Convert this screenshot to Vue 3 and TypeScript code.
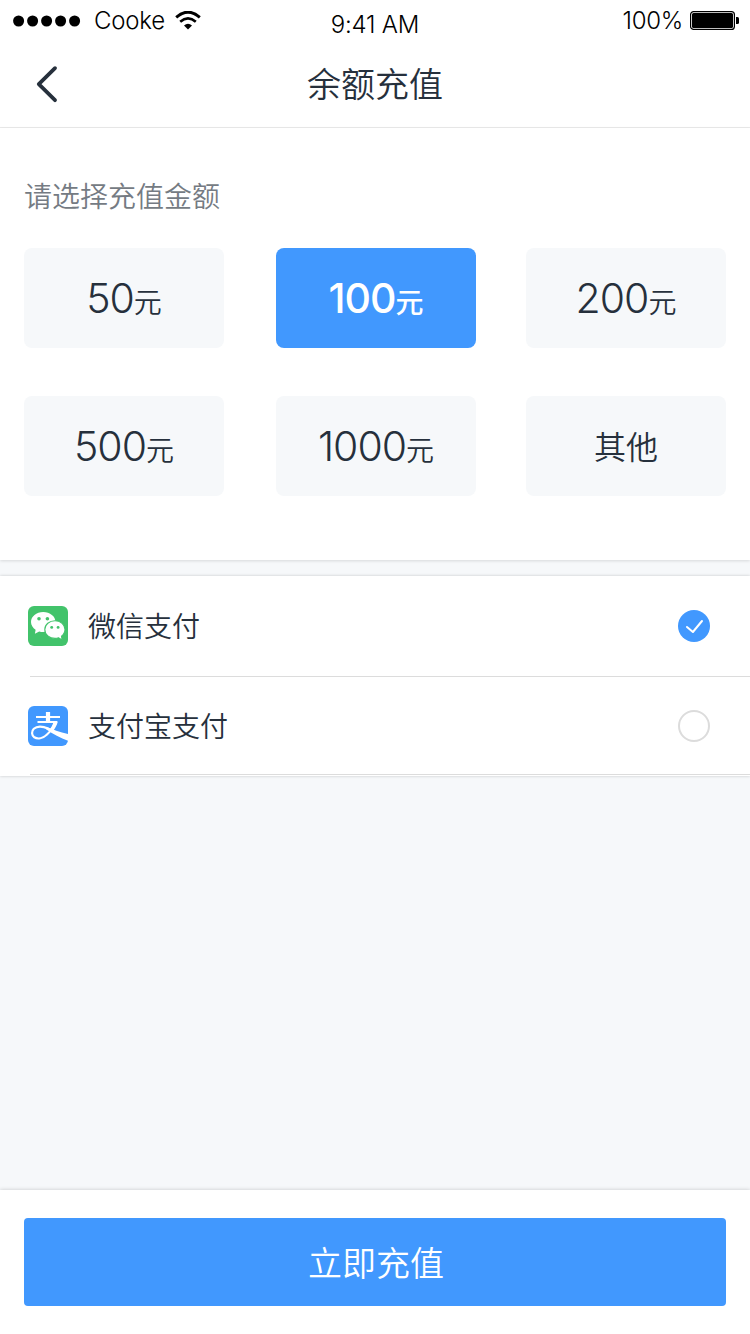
<script setup lang="ts">
import { ref } from 'vue'

interface Amount {
  value: string
  unit: string
}

const amounts: Amount[] = [
  { value: '50', unit: '元' },
  { value: '100', unit: '元' },
  { value: '200', unit: '元' },
  { value: '500', unit: '元' },
  { value: '1000', unit: '元' },
  { value: '', unit: '其他' },
]
const methods = [
  { id: 'wechat', name: '微信支付' },
  { id: 'alipay', name: '支付宝支付' },
]
const selected = ref(1)
const method = ref('wechat')
</script>

<template>
  <div class="page">
    <header class="top">
      <div class="status">
        <div class="carrier">
          <svg width="68" height="12" viewBox="0 0 68 12">
            <circle v-for="n in 5" :key="n" :cx="14 * n - 8.4" cy="6" r="5.5" />
          </svg>
          <span class="carrier-name">Cooke</span>
          <svg class="wifi" width="26" height="19" viewBox="0 0 26 19" fill="none" stroke="#000">
            <path d="M1.2 6.3Q13-4 24.8 6.3" stroke-width="2.9" />
            <path d="M5.2 10.7Q13 4.2 20.8 10.7" stroke-width="2.7" />
            <path d="M9 14.6Q13 10.8 17 14.6L13 18.4Z" fill="#000" stroke="none" />
          </svg>
        </div>
        <span class="time">9:41 AM</span>
        <div class="power">
          <span class="percent">100%</span>
          <svg width="49" height="19" viewBox="0 0 49 19">
            <rect x=".6" y=".6" width="43.8" height="17.8" rx="3" fill="none" stroke="#000" stroke-width="1.2" />
            <rect x="2" y="2" width="41" height="15" rx="1.5" />
            <path d="M46 6h1.5a1.5 1.5 0 0 1 1.5 1.5v4a1.5 1.5 0 0 1-1.5 1.5H46z" />
          </svg>
        </div>
      </div>
      <nav class="nav">
        <svg class="back" width="24" height="38" viewBox="0 0 24 38" fill="none" stroke="#26303c" stroke-width="3.8" stroke-linecap="round" stroke-linejoin="round">
          <path d="M20 3.200L3.800 19.200L20 35.200" />
        </svg>
        <h1 class="title">余额充值</h1>
        <span class="nav-side"></span>
      </nav>
    </header>

    <section class="amounts">
      <h2 class="label">请选择充值金额</h2>
      <div class="grid">
        <button
          v-for="(item, i) in amounts"
          :key="i"
          class="amount"
          :class="{ active: selected === i, other: !item.value }"
          @click="selected = i"
        >
          <span v-if="item.value" class="value">{{ item.value }}</span><span class="unit">{{ item.unit }}</span>
        </button>
      </div>
    </section>

    <section class="methods">
      <div v-for="m in methods" :key="m.id" class="method" @click="method = m.id">
        <svg v-if="m.id === 'wechat'" class="logo" width="40" height="40" viewBox="0 0 40 40">
          <rect width="40" height="40" rx="6" fill="#42c36b" />
          <path d="M15.2 6C8.4 6 3 10.5 3 16c0 3.2 1.8 5.900 4.600 7.700L6.900 27.800l4.300-2.400c1.300.4 2.600.6 4 .6 6.800 0 12.300-4.400 12.300-10S22 6 15.200 6z" fill="#fff" />
          <path d="M27 14.700c5.600 0 10 4 10 8.800 0 2.700-1.400 5-3.500 6.700l.7 3.700-3.600-2.100c-1.100.4-2.300.6-3.600.6-5.600 0-10.200-3.900-10.200-8.900s4.600-8.800 10.200-8.800z" fill="#fff" stroke="#42c36b" stroke-width="1.100" />
          <g fill="#42c36b">
            <circle cx="11" cy="12.800" r="1.800" /><circle cx="19.400" cy="12.800" r="1.800" />
            <circle cx="23.700" cy="21.400" r="1.450" /><circle cx="30.100" cy="21.400" r="1.450" />
          </g>
        </svg>
        <svg v-else class="logo" width="40" height="40" viewBox="0 0 40 40">
          <rect width="40" height="40" rx="6" fill="#4198fe" />
          <g fill="none" stroke="#fff">
            <path d="M8 11H32M9.500 16H29" stroke-width="2" />
            <path d="M20 6V16" stroke-width="4.200" />
            <path d="M27.600 15.500C26 20.500 23 25 19 28.500C14.500 32.700 9.500 33.300 6.300 31.300C3.500 29.300 3.300 25.300 5.800 22.800C9.500 19.500 15.500 20.500 20.500 22.800" stroke-width="2.200" />
          </g>
          <path d="M18 20.800C24 23 32 26.600 40 28V34.800C32.500 32.400 25 28 18 23.300z" fill="#fff" />
          <path d="M25.700 15.400h4.200c-1.200 4.200-3 7.300-5.400 10.200l-3.200-1.700c2.100-2.700 3.500-5.300 4.400-8.500z" fill="#fff" />
        </svg>
        <div class="method-name">{{ m.name }}</div>
        <span class="radio" :class="{ checked: method === m.id }">
          <svg v-if="method === m.id" width="32" height="32" viewBox="0 0 32 32" fill="none" stroke="#fff" stroke-width="2" stroke-linecap="round" stroke-linejoin="round">
            <path d="M9 17L14.900 22L24 11" />
          </svg>
        </span>
      </div>
    </section>

    <footer class="footer">
      <button class="submit">立即充值</button>
    </footer>
  </div>
</template>

<style>
body {
  margin: 0;
}
</style>

<style scoped>
.page {
  display: flex;
  flex-direction: column;
  width: 750px;
  height: 1334px;
  overflow: hidden;
  background: #f6f8fa;
  color: #26303c;
  font-family: "Noto Sans CJK SC", sans-serif;
  font-weight: 350;
}
.top {
  height: 127px;
  background: #fff;
  border-bottom: 1px solid #ebebeb;
}
.status {
  display: grid;
  grid-template-columns: 1fr auto 1fr;
  height: 40px;
  color: #000;
  font: 350 24px/40px Inter, "Liberation Sans", sans-serif;
}
.carrier {
  display: flex;
  align-items: center;
  height: 41px;
  padding-left: 13px;
}
.carrier-name {
  margin-left: 13px;
  letter-spacing: -0.2px;
}
.wifi {
  margin-left: 10px;
}
.time {
  padding-top: 5px;
  letter-spacing: -0.2px;
}
.power {
  display: flex;
  align-items: center;
  justify-content: flex-end;
  height: 41px;
  padding-right: 11px;
}
.percent {
  margin-right: 7px;
  letter-spacing: -0.3px;
}
.nav {
  display: flex;
  align-items: center;
  justify-content: space-between;
  height: 88px;
  padding: 0 35px;
}
.nav-side {
  width: 24px;
}
.title {
  margin: 0 0 2px;
  font-size: 34px;
  font-weight: 350;
  line-height: 50px;
}
.amounts {
  box-sizing: border-box;
  height: 432px;
  padding: 47px 24px 0;
  background: #fff;
  box-shadow: 0 1px 3px rgba(0, 0, 0, 0.13);
}
.label {
  margin: 0;
  color: #757b83;
  font-size: 28px;
  font-weight: 350;
  line-height: 40px;
}
.grid {
  display: grid;
  grid-template-columns: 200px 200px 200px;
  column-gap: 51px;
  row-gap: 48px;
  margin-top: 33px;
}
.amount {
  display: flex;
  align-items: baseline;
  justify-content: center;
  height: 100px;
  padding: 0;
  border: 0;
  border-radius: 8px;
  background: #f6f8fa;
  color: #26303c;
  font: 350 28px/100px "Noto Sans CJK SC", sans-serif;
}
.amount:nth-child(3n + 2) {
  margin: 0 -1px 0 1px;
}
.value {
  font-family: Inter, "Liberation Sans", sans-serif;
  font-size: 41px;
  letter-spacing: -1px;
}
.amount.active {
  background: #4198fe;
  color: #fff;
  font-weight: 500;
}
.other {
  font-size: 32px;
  line-height: 98px;
}
.methods {
  height: 200px;
  margin-top: 16px;
  background: #fff;
  box-shadow: 0 0 3px rgba(0, 0, 0, 0.2);
}
.method {
  box-sizing: border-box;
  display: flex;
  align-items: center;
  height: 98px;
  padding: 0 40px 0 28px;
  background: linear-gradient(#dcdcdc, #dcdcdc) 30px 100% / 100% 1px no-repeat;
}
.method:first-child {
  height: 101px;
  padding-bottom: 1px;
}
.method-name {
  flex: 1;
  margin: 0 0 2px 20px;
  font-size: 28px;
  line-height: 40px;
}
.radio {
  box-sizing: border-box;
  width: 32px;
  height: 32px;
  border: 2px solid #dcdcdc;
  border-radius: 50%;
}
.radio.checked {
  border: 0;
  background: #4198fe;
}
.radio svg {
  display: block;
}
.footer {
  box-sizing: border-box;
  height: 144px;
  margin-top: auto;
  padding: 28px 24px;
  background: #fff;
  box-shadow: 0 0 4px rgba(0, 0, 0, 0.2);
}
.submit {
  display: block;
  width: 100%;
  height: 88px;
  padding: 0 0 0 2px;
  border: 0;
  border-radius: 4px;
  background: #4198fe;
  color: #fff;
  font: 350 34px/88px "Noto Sans CJK SC", sans-serif;
}
</style>
